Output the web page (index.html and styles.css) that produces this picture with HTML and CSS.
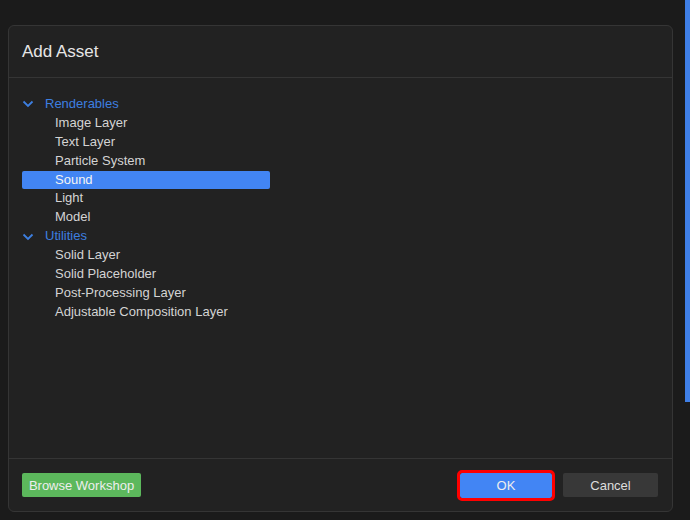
FILE: index.html
```html
<!DOCTYPE html>
<html>
<head>
<meta charset="utf-8">
<link rel="stylesheet" href="styles.css">
</head>
<body>
<div class="scroll-thumb"></div>
<div class="dialog">
  <div class="header">Add Asset</div>
  <div class="body">
    <div class="tree">
      <div class="row group"><svg class="chev" width="12" height="8" viewBox="0 0 12 8"><path d="M1.5 1.5 L6 6 L10.5 1.5" fill="none" stroke="#3d7fe0" stroke-width="1.8"/></svg><span>Renderables</span></div>
      <div class="row item">Image Layer</div>
      <div class="row item">Text Layer</div>
      <div class="row item">Particle System</div>
      <div class="row item selected">Sound</div>
      <div class="row item">Light</div>
      <div class="row item">Model</div>
      <div class="row group"><svg class="chev" width="12" height="8" viewBox="0 0 12 8"><path d="M1.5 1.5 L6 6 L10.5 1.5" fill="none" stroke="#3d7fe0" stroke-width="1.8"/></svg><span>Utilities</span></div>
      <div class="row item">Solid Layer</div>
      <div class="row item">Solid Placeholder</div>
      <div class="row item">Post-Processing Layer</div>
      <div class="row item">Adjustable Composition Layer</div>
    </div>
  </div>
  <div class="footer">
    <button class="btn green">Browse Workshop</button>
    <div class="spacer"></div>
    <button class="btn blue highlight">OK</button>
    <button class="btn gray">Cancel</button>
  </div>
</div>
</body>
</html>
```
FILE: styles.css
```css
html, body {
  margin: 0;
  padding: 0;
}
body {
  width: 690px;
  height: 520px;
  background: #1b1b1b;
  font-family: "Liberation Sans", Arial, sans-serif;
  overflow: hidden;
  position: relative;
}
.scroll-thumb {
  position: absolute;
  right: 0;
  top: 0;
  width: 5px;
  height: 402px;
  background: #3f7fe6;
}
.dialog {
  margin: 25px 0 0 8px;
  width: 665px;
  height: 487px;
  box-sizing: border-box;
  border: 1px solid #353535;
  border-radius: 6px;
  background: #222222;
  display: flex;
  flex-direction: column;
}
.header {
  height: 52px;
  flex: none;
  box-sizing: border-box;
  border-bottom: 1px solid #353535;
  padding-left: 13px;
  display: flex;
  align-items: center;
  font-size: 17px;
  color: #e6e6e6;
}
.body {
  flex: 1;
  padding: 17px 0 0 13px;
  border-bottom: 1px solid #353535;
}
.tree {
  width: 248px;
}
.row {
  height: 18.9px;
  line-height: 18.9px;
  font-size: 13px;
  color: #d4d4d4;
  white-space: nowrap;
}
.row.group {
  display: flex;
  align-items: center;
  color: #3d7fe0;
}
.chev {
  margin: 0 11px 0 0;
  flex: none;
}
.row.item {
  padding-left: 33px;
}
.row.selected {
  background: #4285f4;
  color: #f4f4f4;
  border-radius: 2px;
}
.footer {
  height: 52px;
  flex: none;
  display: flex;
  align-items: center;
  padding: 0 14px 0 13px;
}
.spacer {
  flex: 1;
}
.btn {
  font-family: "Liberation Sans", Arial, sans-serif;
  font-size: 13px;
  height: 24px;
  border: none;
  border-radius: 2px;
  padding: 0;
  color: #eeeeee;
}
.btn.green {
  background: #5cb85c;
  width: 119px;
}
.btn.blue {
  background: #4285f4;
  width: 92px;
  height: 25px;
}
.btn.highlight {
  outline: 3px solid #ff0000;
  outline-offset: 0;
}
.btn.gray {
  background: #383838;
  width: 95px;
  margin-left: 11px;
  color: #dddddd;
}
```
